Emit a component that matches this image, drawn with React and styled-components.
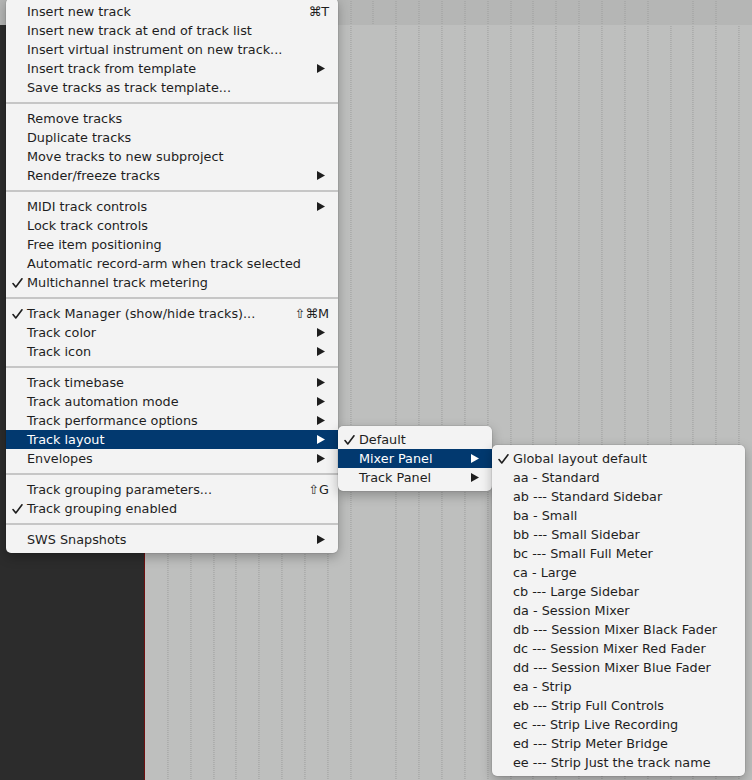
import styled, { createGlobalStyle } from 'styled-components'

const GlobalStyle = createGlobalStyle`
  html, body {
    margin: 0;
    padding: 0;
    background: #bebfbe;
  }
  body {
    font-family: 'DejaVu Sans', 'Liberation Sans', sans-serif;
  }
`

const GRID = '22.85px'

const dotted = (bg, offset) => `
  background-color: ${bg};
  background-image:
    repeating-linear-gradient(180deg, ${bg} 0 1px, transparent 1px 2px),
    repeating-linear-gradient(90deg, transparent 0 21.85px, #9c9d9c 21.85px ${GRID});
  background-position: 0 0, ${offset} 0;
`

const Workspace = styled.div`
  position: relative;
  width: 752px;
  height: 780px;
  overflow: hidden;
  display: flex;
  flex-direction: column;
`

const TopBar = styled.div`
  height: 25px;
  flex: none;
  ${dotted('#b5b6b5', '-14.5px')}
`

const Body = styled.div`
  flex: 1;
  display: flex;
`

const TrackPanel = styled.div`
  width: 144px;
  background: #2c2c2c;
  border-right: 1px solid #6e1010;
`

const Arrange = styled.div`
  flex: 1;
  ${dotted('#bebfbe', '0.45px')}
`

const Menu = styled.div`
  position: absolute;
  left: ${p => p.$left}px;
  top: ${p => p.$top}px;
  width: ${p => p.$width}px;
  z-index: ${p => p.$z || 1};
  box-sizing: border-box;
  padding: 4px 0;
  background: #f3f3f3;
  border-radius: 5px;
  box-shadow: 0 0 0 0.5px rgba(0, 0, 0, 0.12), 0 4px 12px rgba(0, 0, 0, 0.28);
  font-size: 12.8px;
  color: #1e1e1e;
`

const Item = styled.div`
  position: relative;
  height: 19px;
  display: flex;
  align-items: center;
  padding: 0 13px 0 21px;
  white-space: nowrap;
  background: ${p => (p.$active ? '#02396f' : 'transparent')};
  color: ${p => (p.$active ? '#ffffff' : 'inherit')};
`

const CheckBox = styled.span`
  position: absolute;
  left: 6px;
  top: 5px;
  display: flex;
`

const Label = styled.span`
  flex: 1;
`

const Shortcut = styled.span`
  margin-right: -4px;
`

const Separator = styled.div`
  height: 12px;
  display: flex;
  align-items: center;
  &::after {
    content: '';
    flex: 1;
    height: 2px;
    background: #c6c6c6;
  }
`

const Check = () => (
  <CheckBox>
    <svg width='11' height='10' viewBox='0 0 11 10'>
      <path
        d='M1 5.6 L3.8 9 L10 0.8'
        fill='none'
        stroke='currentColor'
        strokeWidth='1.6'
        strokeLinecap='round'
        strokeLinejoin='round'
      />
    </svg>
  </CheckBox>
)

const Arrow = () => (
  <svg width='8' height='9' viewBox='0 0 8 9'>
    <polygon points='0,0 8,4.5 0,9' fill='currentColor' />
  </svg>
)

const MenuItem = ({ label, checked, shortcut, sub, active }) => (
  <Item $active={active}>
    {checked && <Check />}
    <Label>{label}</Label>
    {shortcut && <Shortcut>{shortcut}</Shortcut>}
    {sub && <Arrow />}
  </Item>
)

const mainMenu = [
  [
    { label: 'Insert new track', shortcut: '⌘T' },
    { label: 'Insert new track at end of track list' },
    { label: 'Insert virtual instrument on new track...' },
    { label: 'Insert track from template', sub: true },
    { label: 'Save tracks as track template...' },
  ],
  [
    { label: 'Remove tracks' },
    { label: 'Duplicate tracks' },
    { label: 'Move tracks to new subproject' },
    { label: 'Render/freeze tracks', sub: true },
  ],
  [
    { label: 'MIDI track controls', sub: true },
    { label: 'Lock track controls' },
    { label: 'Free item positioning' },
    { label: 'Automatic record-arm when track selected' },
    { label: 'Multichannel track metering', checked: true },
  ],
  [
    { label: 'Track Manager (show/hide tracks)...', checked: true, shortcut: '⇧⌘M' },
    { label: 'Track color', sub: true },
    { label: 'Track icon', sub: true },
  ],
  [
    { label: 'Track timebase', sub: true },
    { label: 'Track automation mode', sub: true },
    { label: 'Track performance options', sub: true },
    { label: 'Track layout', sub: true, active: true },
    { label: 'Envelopes', sub: true },
  ],
  [
    { label: 'Track grouping parameters...', shortcut: '⇧G' },
    { label: 'Track grouping enabled', checked: true },
  ],
  [{ label: 'SWS Snapshots', sub: true }],
]

const layoutMenu = [
  { label: 'Default', checked: true },
  { label: 'Mixer Panel', sub: true, active: true },
  { label: 'Track Panel', sub: true },
]

const mixerLayouts = [
  'aa - Standard',
  'ab --- Standard Sidebar',
  'ba - Small',
  'bb --- Small Sidebar',
  'bc --- Small Full Meter',
  'ca - Large',
  'cb --- Large Sidebar',
  'da - Session Mixer',
  'db --- Session Mixer Black Fader',
  'dc --- Session Mixer Red Fader',
  'dd --- Session Mixer Blue Fader',
  'ea - Strip',
  'eb --- Strip Full Controls',
  'ec --- Strip Live Recording',
  'ed --- Strip Meter Bridge',
  'ee --- Strip Just the track name',
]

const App = () => {
  return (
    <>
      <GlobalStyle />
      <Workspace>
        <TopBar />
        <Body>
          <TrackPanel />
          <Arrange />
        </Body>

        <Menu $left={6} $top={-2.5} $width={332}>
          {mainMenu.map((group, gi) => (
            <div key={gi}>
              {gi > 0 && <Separator />}
              {group.map(item => (
                <MenuItem key={item.label} {...item} />
              ))}
            </div>
          ))}
        </Menu>

        <Menu $left={338} $top={425.5} $width={154} $z={2}>
          {layoutMenu.map(item => (
            <MenuItem key={item.label} {...item} />
          ))}
        </Menu>

        <Menu $left={492} $top={444.5} $width={253} $z={3}>
          <MenuItem label='Global layout default' checked />
          {mixerLayouts.map(name => (
            <MenuItem key={name} label={name} />
          ))}
        </Menu>
      </Workspace>
    </>
  )
}

export default App
